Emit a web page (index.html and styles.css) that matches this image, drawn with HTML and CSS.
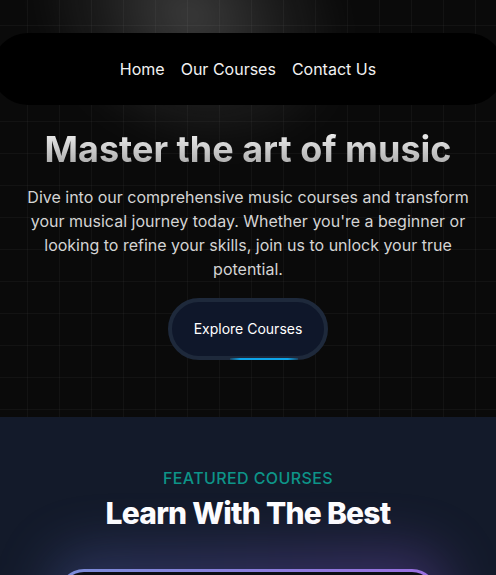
FILE: index.html
```html
<!DOCTYPE html>
<html lang="en">
<head>
<meta charset="utf-8">
<title>Music School</title>
<link rel="stylesheet" href="styles.css">
</head>
<body>
<section class="hero">
  <div class="glow"></div>
  <nav class="nav">
    <a href="#">Home</a>
    <a href="#">Our Courses</a>
    <a href="#">Contact Us</a>
  </nav>
  <h1 class="title">Master the art of music</h1>
  <p class="lead">Dive into our comprehensive music courses and transform your musical journey today. Whether you're a beginner or looking to refine your skills, join us to unlock your true potential.</p>
  <div class="cta-wrap">
    <a class="cta" href="#">Explore Courses<span class="cta-line"></span></a>
  </div>
</section>
<section class="featured">
  <p class="eyebrow">FEATURED COURSES</p>
  <h2 class="heading">Learn With The Best</h2>
  <div class="card-wrap">
    <div class="card-glow"></div>
    <div class="card"></div>
  </div>
</section>
</body>
</html>
```
FILE: styles.css
```css
* { box-sizing: border-box; }
html, body { margin: 0; padding: 0; }
body {
  background: #0a0a0a;
  font-family: Inter, "Noto Sans", sans-serif;
  color: #fff;
  overflow-x: hidden;
}
.hero {
  position: relative;
  overflow: hidden;
  padding: 33px 0 57px;
  background-color: #0a0a0a;
  background-image:
    linear-gradient(to right, rgba(255,255,255,0.035) 1px, transparent 1px),
    linear-gradient(to bottom, rgba(255,255,255,0.035) 1px, transparent 1px);
  background-size: 32px 32px;
  background-position: 27px 25px;
  display: flex;
  flex-direction: column;
  align-items: center;
}
.glow {
  position: absolute;
  left: 20px;
  top: -120px;
  width: 340px;
  height: 270px;
  border-radius: 50%;
  background: radial-gradient(ellipse at center, rgba(255,255,255,0.2) 0%, rgba(255,255,255,0.07) 40%, transparent 70%);
  transform: rotate(30deg);
  filter: blur(12px);
  pointer-events: none;
}
.nav {
  position: relative;
  align-self: stretch;
  margin: 0 -8px;
  height: 72px;
  border-radius: 9999px;
  background: #000;
  display: flex;
  align-items: center;
  justify-content: center;
  gap: 16px;
  font-size: 16px;
}
.nav a {
  color: #f2f2f2;
  text-decoration: none;
}
.title {
  position: relative;
  margin: 24px 0 0;
  font-size: 36px;
  line-height: 40px;
  font-weight: 700;
  text-align: center;
  background: linear-gradient(to bottom, #f5f5f5, #a3a3a3);
  -webkit-background-clip: text;
  background-clip: text;
  color: transparent;
}
.lead {
  position: relative;
  margin: 16px 0 0;
  padding: 0 24px;
  font-size: 16px;
  line-height: 24px;
  text-align: center;
  color: #d4d4d4;
}
.cta-wrap {
  margin-top: 17px;
  display: flex;
  justify-content: center;
}
.cta {
  position: relative;
  display: inline-block;
  padding: 17px 22px;
  border: 4px solid #1e293b;
  border-radius: 9999px;
  background: #0f172a;
  color: #fff;
  font-size: 14px;
  line-height: 20px;
  text-decoration: none;
}
.cta-line {
  position: absolute;
  left: 58px;
  right: 26px;
  bottom: -4px;
  height: 2px;
  background: linear-gradient(to right, rgba(14,165,233,0.2), #0ea5e9 15%, #0ea5e9 85%, rgba(14,165,233,0.2));
}
.featured {
  background: #131a2a;
  padding: 49px 0 0;
  display: flex;
  flex-direction: column;
  align-items: center;
  text-align: center;
}
.eyebrow {
  margin: 0;
  font-size: 16px;
  line-height: 24px;
  font-weight: 500;
  letter-spacing: 0.4px;
  color: #0d9488;
}
.heading {
  margin: 5px 0 0;
  font-size: 30px;
  line-height: 36px;
  font-weight: 800;
  letter-spacing: -0.025em;
  color: #fff;
}
.card-wrap {
  position: relative;
  margin-top: 38px;
  width: 380px;
}
.card-glow {
  position: absolute;
  left: -10px;
  right: -10px;
  top: -20px;
  height: 110px;
  border-radius: 40px;
  background: linear-gradient(to right, rgba(99,120,210,0.25), rgba(140,90,220,0.3));
  filter: blur(26px);
}
.card {
  position: relative;
  height: 200px;
  border-radius: 26px;
  border: 3px solid transparent;
  background:
    linear-gradient(#0b0d14, #0b0d14) padding-box,
    linear-gradient(to right, #7a8cd8, #9a6fe0) border-box;
}
```
